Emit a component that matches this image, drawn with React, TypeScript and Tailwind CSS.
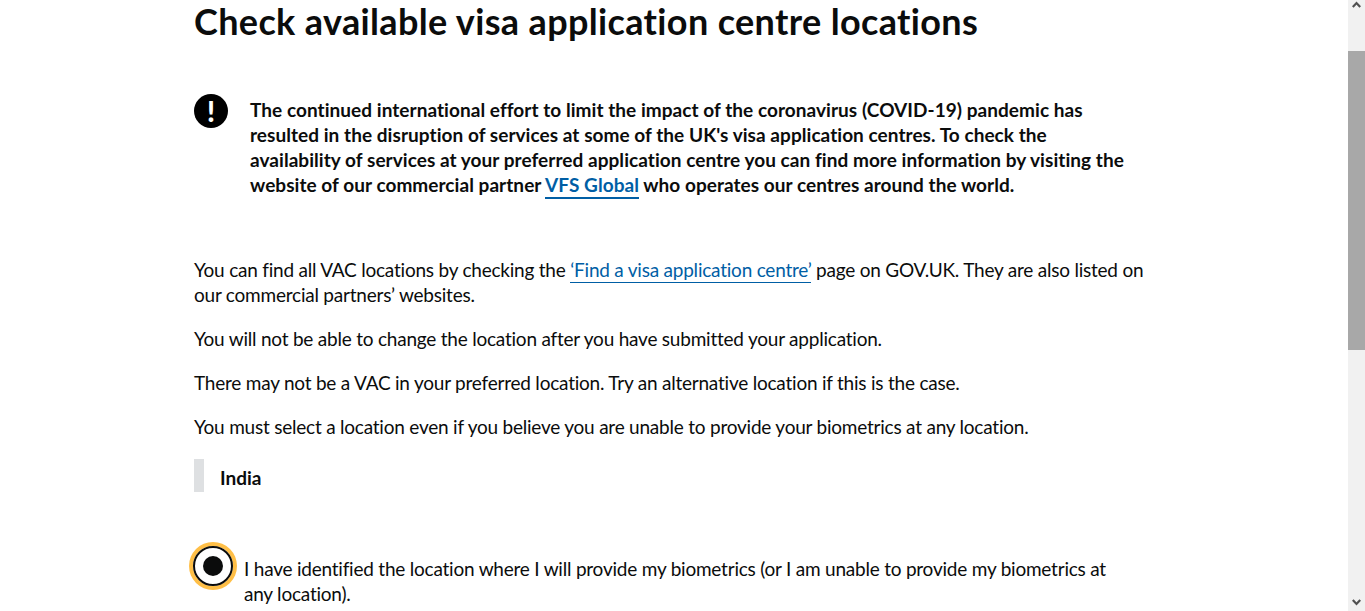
import React from 'react';

const font = "font-['Lato','Noto_Sans',sans-serif]";
const body = 'text-[19px] leading-[25px] tracking-[-0.22px]';

function WarningIcon() {
  return (
    <span className="mt-[-3px] flex h-[34px] w-[34px] shrink-0 items-center justify-center rounded-full bg-black text-[28px] font-black leading-none text-white">
      !
    </span>
  );
}

function Chevron({ up }: { up?: boolean }) {
  return (
    <svg width="9" height="7" viewBox="0 0 9 7" fill="none" stroke="#505050" strokeWidth="2.2">
      <path d={up ? 'M0.8 6 4.5 2 8.2 6' : 'M0.8 1 4.5 5 8.2 1'} />
    </svg>
  );
}

export default function App() {
  return (
    <div className={`flex h-[611px] overflow-hidden bg-white text-[#0b0c0c] ${font}`}>
      <main className="min-w-0 flex-1 pl-[194px] pr-[200px]">
        <h1 className="mt-[1px] whitespace-nowrap text-[36px] font-bold leading-[40px] tracking-[0.35px]">
          Check available visa application centre locations
        </h1>

        <div className="mt-[56px] flex gap-[22px]">
          <WarningIcon />
          <p className="w-[885px] text-[19px] font-bold leading-[25px] tracking-[0.05px]">
            The continued international effort to limit the impact of the coronavirus (COVID-19) pandemic has resulted in the disruption of services at some of the UK's visa application centres. To check the availability of services at your preferred application centre you can find more information by visiting the website of our commercial partner{' '}
            <a className="border-b-2 border-[#005ea5] pb-px text-[#005ea5]">VFS Global</a> who operates our centres around the world.
          </p>
        </div>

        <p className={`mt-[60px] ${body}`}>
          You can find all VAC locations by checking the{' '}
          <a className="border-b border-[#005ea5] pb-px text-[#005ea5]">‘Find a visa application centre’</a> page on GOV.UK. They are also listed on our commercial partners’ websites.
        </p>
        <p className={`mt-[19px] ${body}`}>You will not be able to change the location after you have submitted your application.</p>
        <p className={`mt-[19px] ${body}`}>There may not be a VAC in your preferred location. Try an alternative location if this is the case.</p>
        <p className={`mt-[19px] ${body}`}>You must select a location even if you believe you are unable to provide your biometrics at any location.</p>

        <div className="mt-[20px] flex h-[33px] items-center border-l-[10px] border-[#dee0e2] pl-[16px] pt-[6px] text-[19px] font-bold">India</div>

        <div className="mt-[54px] flex gap-[11px]">
          <span className="ml-[-1px] flex h-[40px] w-[40px] shrink-0 items-center justify-center rounded-full border-2 border-[#0b0c0c] shadow-[0_0_0_4px_#ffbf47]">
            <span className="h-[20px] w-[20px] rounded-full bg-[#0b0c0c]" />
          </span>
          <p className={`max-w-[880px] pt-[10px] ${body}`}>
            I have identified the location where I will provide my biometrics (or I am unable to provide my biometrics at any location).
          </p>
        </div>
      </main>

      <div className="relative flex w-[17px] shrink-0 flex-col bg-[#f1f1f1]">
        <div className="flex h-[8px] items-center justify-center">
          <Chevron up />
        </div>
        <div className="mt-[43px] h-[299px] bg-[#a8a8a8]" />
        <div className="absolute bottom-[5px] left-[4px]">
          <Chevron />
        </div>
      </div>
    </div>
  );
}
